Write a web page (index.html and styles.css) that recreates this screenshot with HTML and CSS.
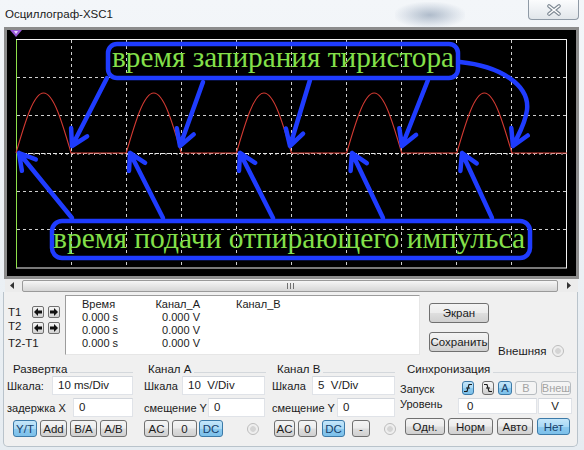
FILE: index.html
```html
<!DOCTYPE html>
<html>
<head>
<meta charset="utf-8">
<link rel="stylesheet" href="styles.css">
</head>
<body>
<div class="win">
  <div class="blur"></div>
  <div class="titlebar">
    <span class="title">Осциллограф-XSC1</span>
    <div class="close">
      <svg width="16" height="12" viewBox="0 0 16 12"><path d="M3,2 L13,10 M13,2 L3,10" stroke="#7d8893" stroke-width="3.6" stroke-linecap="round"/><path d="M3,2 L13,10 M13,2 L3,10" stroke="#fff" stroke-width="1.6" stroke-linecap="round"/></svg>
    </div>
  </div>

  <div class="scope">
    <svg width="569" height="246" viewBox="7 30 569 246">
      <rect x="7" y="30" width="569" height="246" fill="#000"/>
      <g stroke="#cfcfcf" stroke-width="1" stroke-dasharray="3 3" fill="none">
        <path d="M71.5,40 V268 M126.5,40 V268 M181.5,40 V268 M236.5,40 V268 M291.5,40 V268 M346.5,40 V268 M401.5,40 V268 M456.5,40 V268 M511.5,40 V268"/>
        <path d="M17,77.5 H566 M17,115.5 H566 M17,191.5 H566 M17,229.5 H566"/>
      </g>
      <rect x="16.5" y="39.5" width="550" height="228.5" fill="none" stroke="#f2f2f2" stroke-width="1"/>
      <path d="M16.5,40 V268" stroke="#8ee04a" stroke-width="1"/>
      <path d="M17,153.5 H566" stroke="#e8e8e8" stroke-width="1" stroke-dasharray="4 2"/>
      <path d="M17,154 H566" stroke="#d8d8d8" stroke-width="2" stroke-dasharray="1 4.5"/>
      <path fill="none" stroke="#d23a32" stroke-width="1.1" d="M16,153 C25.21,121.5 33.59,93 43.55,93 C53.51,93 61.89,121.5 71.1,153 L126.2,153 C135.41,121.5 143.79,93 153.75,93 C163.71,93 172.09,121.5 181.3,153 L236.4,153 C245.61,121.5 253.99,93 263.95,93 C273.91,93 282.29,121.5 291.5,153 L346.6,153 C355.81,121.5 364.19,93 374.15,93 C384.11,93 392.49,121.5 401.7,153 L456.8,153 C466.01,121.5 474.39,93 484.35,93 C494.31,93 502.69,121.5 511.9,153 L567,153"/>
      <path d="M10,30 H22 L16,37 Z" fill="#9a5ad8"/>
      <path d="M14,31 H18 L16,34 Z" fill="#e8d8ff"/>
      <g fill="none" stroke="#1f3cff" stroke-width="4.5" stroke-linecap="round" stroke-linejoin="round">
        <rect x="108" y="44" width="350" height="34" rx="9"/>
        <rect x="52" y="221" width="478" height="37" rx="10"/>
        <path d="M107,78 L72,146 M87.1,136.3 L72,146 L71.1,128"/>
        <path d="M203,82 L180,146 M193.7,134.4 L180,146 L176.8,128.3"/>
        <path d="M310,80 L290,146 M303.1,133.7 L290,146 L285.9,128.5"/>
        <path d="M428,80 L402,146 M416.1,134.8 L402,146 L399.3,128.2"/>
        <path d="M460,62 C500,66 530,85 527,110 C525,125 518,135 513,146 M527.7,135.5 L513,146 L511.3,128.1"/>
        <path d="M72,218 L19,153 M21.9,170.8 L19,153 L35.8,159.4"/>
        <path d="M163,218 L130,153 M129,171 L130,153 L145.1,162.8"/>
        <path d="M273,218 L240,153 M239,171 L240,153 L255.1,162.8"/>
        <path d="M383,218 L352,153 M350.6,170.9 L352,153 L366.8,163.2"/>
        <path d="M492,218 L462,153 M460.4,170.9 L462,153 L476.7,163.4"/>
      </g>
      <text x="112" y="67" class="ann" textLength="342" lengthAdjust="spacingAndGlyphs">время запирания тиристора</text>
      <text x="53" y="248" class="ann" textLength="472" lengthAdjust="spacingAndGlyphs">время подачи отпирающего импульса</text>
    </svg>
  </div>

  <div class="hscroll">
    <div class="sbtn"><svg width="5" height="7" viewBox="0 0 5 7"><path d="M4,0 L0,3.5 L4,7 Z" fill="#333"/></svg></div>
    <div class="thumb"><span class="grip"></span></div>
    <div class="sbtn right"><svg width="5" height="7" viewBox="0 0 5 7"><path d="M1,0 L5,3.5 L1,7 Z" fill="#333"/></svg></div>
  </div>

  <div class="lower">
    <div class="readout">
      <div class="tpanel">
        <div class="trow r1"><span class="tlabel">T1</span>
          <span class="abtn"><svg width="10" height="10" viewBox="0 0 10 10"><path d="M1,5 L5,1 V3.5 H9 V6.5 H5 V9 Z" fill="#111"/></svg></span>
          <span class="abtn"><svg width="10" height="10" viewBox="0 0 10 10"><path d="M9,5 L5,1 V3.5 H1 V6.5 H5 V9 Z" fill="#111"/></svg></span>
        </div>
        <div class="trow r2"><span class="tlabel up">T2</span>
          <span class="abtn"><svg width="10" height="10" viewBox="0 0 10 10"><path d="M1,5 L5,1 V3.5 H9 V6.5 H5 V9 Z" fill="#111"/></svg></span>
          <span class="abtn"><svg width="10" height="10" viewBox="0 0 10 10"><path d="M9,5 L5,1 V3.5 H1 V6.5 H5 V9 Z" fill="#111"/></svg></span>
        </div>
        <div class="tdiff">T2-T1</div>
      </div>
      <div class="table">
        <div class="th">Время</div><div class="th c2">Канал_А</div><div class="th c3">Канал_В</div>
        <div>0.000 s</div><div class="c2">0.000 V</div><div class="c3"></div>
        <div>0.000 s</div><div class="c2">0.000 V</div><div class="c3"></div>
        <div>0.000 s</div><div class="c2">0.000 V</div><div class="c3"></div>
      </div>
      <div class="btncol">
        <div class="btn big">Экран</div>
        <div class="btn big save">Сохранить</div>
      </div>
      <div class="ext">Внешняя <span class="radio"></span></div>
    </div>

    <div class="controls">
      <div class="group g1">
        <div class="gtitle">Развертка</div>
        <div class="row"><span class="lbl" style="width:45px">Шкала:</span><span class="inp" style="width:81px">10 ms/Div</span></div>
        <div class="row"><span class="lbl" style="width:66px">задержка X</span><span class="inp" style="width:60px">0</span></div>
        <div class="row brow b1">
          <span class="btn sel" style="width:24px">Y/T</span>
          <span class="btn" style="width:27px">Add</span>
          <span class="btn" style="width:27px">B/A</span>
          <span class="btn" style="width:27px">A/B</span>
        </div>
      </div>
      <div class="group g2">
        <div class="gtitle">Канал A</div>
        <div class="row"><span class="lbl" style="width:38px">Шкала</span><span class="inp pre" style="width:83px">10  V/Div</span></div>
        <div class="row"><span class="lbl" style="width:64px">смещение Y</span><span class="inp" style="width:57px">0</span></div>
        <div class="row brow b2">
          <span class="btn" style="width:25px">AC</span>
          <span class="btn" style="width:25px;margin-left:3px">0</span>
          <span class="btn sel" style="width:24px;margin-left:2px">DC</span>
          <span class="radio" style="margin-left:24px"></span>
        </div>
      </div>
      <div class="group g3">
        <div class="gtitle">Канал B</div>
        <div class="row"><span class="lbl" style="width:40px">Шкала</span><span class="inp pre" style="width:83px">5  V/Div</span></div>
        <div class="row"><span class="lbl" style="width:65px">смещение Y</span><span class="inp" style="width:58px">0</span></div>
        <div class="row brow b3">
          <span class="btn" style="width:21px">AC</span>
          <span class="btn" style="width:19px;margin-left:3px">0</span>
          <span class="btn sel" style="width:23px;margin-left:5px">DC</span>
          <span class="btn" style="width:18px;margin-left:7px">-</span>
          <span class="radio" style="margin-left:14px"></span>
        </div>
      </div>
      <div class="group g4">
        <div class="gtitle">Синхронизация</div>
        <div class="row srow1"><span class="lbl" style="width:62px">Запуск</span>
          <span class="btn sel sm" style="width:12px"><svg width="10" height="10" viewBox="0 0 10 10"><path d="M1,8.5 H4 L6,1.5 H9 M3,5 H7" fill="none" stroke="#1a1a1a" stroke-width="1.1"/></svg></span>
          <span class="btn sm" style="width:12px;margin-left:8px"><svg width="10" height="10" viewBox="0 0 10 10"><path d="M1,1.5 H4 L6,8.5 H9 M3,5 H7" fill="none" stroke="#1a1a1a" stroke-width="1.1"/></svg></span>
          <span class="btn sel sm" style="width:14px;margin-left:4px">A</span>
          <span class="btn dis sm" style="width:22px;margin-left:3px">B</span>
          <span class="btn dis sm" style="width:30px;margin-left:4px">Внеш</span>
        </div>
        <div class="row srow2"><span class="lbl" style="width:58px">Уровень</span><span class="inp lvl" style="width:79px">0</span><span class="inp lvl unit" style="width:34px">V</span></div>
        <div class="row brow b4">
          <span class="btn" style="width:40px">Одн.</span>
          <span class="btn" style="width:45px;margin-left:3px">Норм</span>
          <span class="btn" style="width:36px;margin-left:4px">Авто</span>
          <span class="btn sel" style="width:33px;margin-left:4px">Нет</span>
        </div>
      </div>
    </div>
  </div>
</div>
</body>
</html>
```

FILE: styles.css
```css
* { box-sizing: border-box; }
body {
  margin: 0;
  background: #e9eef3;
  font-family: "Liberation Sans", Arial, sans-serif;
  font-size: 11px;
  color: #1b1b1b;
}
.win {
  position: relative;
  width: 584px;
  height: 450px;
  overflow: hidden;
  background: linear-gradient(180deg, #f3f6f9 0%, #e6ecf1 100%);
}
.blur {
  position: absolute;
  left: 395px;
  top: 2px;
  width: 70px;
  height: 26px;
  background: radial-gradient(ellipse at center, rgba(120,140,165,0.55) 0%, rgba(160,175,195,0.25) 50%, rgba(255,255,255,0) 75%);
}
.titlebar {
  position: relative;
  height: 27px;
  display: flex;
  justify-content: space-between;
  align-items: flex-start;
  padding: 0 5px 0 5px;
}
.title {
  margin-top: 7px;
  line-height: 14px;
  font-size: 11.5px;
  color: #1a1a1a;
}
.close {
  width: 51px;
  height: 20px;
  border: 1px solid #8f9aa6;
  border-top: none;
  border-radius: 0 0 4px 4px;
  background: linear-gradient(180deg, #fbfcfd 0%, #eef1f4 50%, #e1e6ea 100%);
  display: flex;
  align-items: center;
  justify-content: center;
}
.close svg { display: block; }

.scope {
  margin-left: 4px;
  width: 575px;
  height: 252px;
  border: 3px solid #8c8c8c;
  box-shadow: inset 0 0 0 1px #5a5a5a;
  background: #000;
}
.scope svg { display: block; }
.ann {
  font-family: "Liberation Serif", "DejaVu Serif", "Noto Serif", serif;
  font-size: 30px;
  fill: #84e04a;
}

.hscroll {
  margin-left: 5px;
  width: 573px;
  height: 13px;
  display: flex;
  align-items: center;
  background: #ececec;
}
.sbtn {
  width: 15px;
  height: 13px;
  display: flex;
  align-items: center;
  justify-content: center;
}
.sbtn svg { display: block; }
.sbtn.right { width: 20px; margin-left: auto; }
.thumb {
  margin-left: 2px;
  width: 536px;
  height: 12px;
  border: 1px solid #9a9a9a;
  border-radius: 2px;
  background: linear-gradient(180deg, #f6f6f6 0%, #e6e6e6 50%, #d6d6d6 100%);
  display: flex;
  align-items: center;
  justify-content: center;
}
.grip {
  width: 7px;
  height: 6px;
  background: repeating-linear-gradient(90deg, #6f6f6f 0 1px, transparent 1px 3px);
}

.lower {
  margin-left: 3px;
  width: 575px;
  height: 155px;
  border: 1px solid #b9c3cb;
  border-top: none;
  border-radius: 0 0 5px 5px;
  background: #f0f0f0;
}
.readout {
  display: flex;
  height: 64px;
}
.tpanel {
  width: 61px;
  padding-left: 4px;
}
.trow {
  display: flex;
  align-items: center;
  height: 12px;
}
.trow.r1 { margin-top: 14px; }
.trow.r2 { margin-top: 4px; }
.tlabel { width: 24px; font-size: 11.5px; line-height: 12px; }
.tlabel.up { position: relative; top: -2px; }
.abtn {
  width: 12px;
  height: 12px;
  margin-right: 4px;
  border: 1px solid #707070;
  border-radius: 2px;
  background: linear-gradient(180deg, #f4f4f4 0%, #e4e4e4 50%, #d2d2d2 100%);
  display: flex;
  align-items: center;
  justify-content: center;
}
.abtn svg { display: block; }
.tdiff {
  margin-top: 3px;
  line-height: 12px;
  font-size: 11.5px;
}
.table {
  margin-top: 3px;
  width: 355px;
  height: 60px;
  background: #fff;
  border-top: 1px solid #9c9c9c;
  border-left: 1px solid #9c9c9c;
  border-right: 1px solid #e6e6e6;
  border-bottom: 1px solid #e6e6e6;
  padding: 1px 0 0 16px;
  display: grid;
  grid-template-columns: 66px 52px 80px;
  grid-auto-rows: 13px;
  grid-template-rows: 14px;
  line-height: 13px;
  align-content: start;
}
.table .th { line-height: 14px; }
.table .c2 { text-align: right; }
.table .c3 { padding-left: 36px; }
.btncol {
  margin-left: 9px;
  width: 60px;
  display: flex;
  flex-direction: column;
  padding-top: 11px;
}
.btn {
  height: 17px;
  border: 1px solid #707070;
  border-radius: 3px;
  background: linear-gradient(180deg, #f4f4f4 0%, #ececec 48%, #dedede 52%, #d0d0d0 100%);
  display: flex;
  align-items: center;
  justify-content: center;
  font-size: 11.5px;
  color: #1b1b1b;
  white-space: nowrap;
}
.btn.big { height: 20px; }
.btn.save { margin-top: 9px; }
.btn.sel {
  border-color: #3c7aa8;
  background: linear-gradient(180deg, #c4e6fa 0%, #a9d9f5 50%, #8cc9ee 52%, #7cc0ea 100%);
  color: #16406a;
}
.btn.dis {
  border-color: #b7bcc0;
  background: #f4f4f4;
  color: #a3a3a3;
}
.btn.sm { height: 14px; font-size: 11px; }
.btn svg { display: block; }
.ext {
  margin-left: 9px;
  margin-top: 52px;
  height: 14px;
  line-height: 14px;
  display: flex;
  align-items: center;
  font-size: 11.5px;
}
.ext .radio { margin-left: 6px; }
.radio {
  display: inline-block;
  width: 12px;
  height: 12px;
  border-radius: 50%;
  border: 1px solid #bcbcbc;
  background: radial-gradient(circle at 50% 50%, #d4d4d4 0 35%, #ececec 45%, #f6f6f6 100%);
}

.controls {
  display: flex;
  height: 90px;
}
.group {
  display: flex;
  flex-direction: column;
}
.g1 { width: 132px; padding-left: 3px; }
.g2 { width: 126px; margin-left: 7px; padding-left: 1px; }
.g3 { width: 126px; margin-left: 3px; }
.g4 { width: 176px; margin-left: 2px; }
.gtitle {
  margin-top: 7px;
  height: 13px;
  line-height: 13px;
  display: flex;
  align-items: center;
  font-size: 11.5px;
  white-space: nowrap;
}
.gtitle::after {
  content: "";
  flex: 1;
  margin: 5px 3px 0 3px;
  border-top: 1px solid #d4d8dc;
}
.g1 .gtitle { padding-left: 6px; }
.g2 .gtitle { padding-left: 4px; }
.g3 .gtitle { padding-left: 5px; }
.g4 .gtitle { padding-left: 7px; }
.g4 .gtitle::after { margin-right: 0; }
.row {
  display: flex;
  align-items: center;
  height: 19px;
  margin-top: 3px;
}
.row:nth-child(2) { margin-top: 0; }
.lbl {
  font-size: 11px;
  white-space: nowrap;
}
.inp {
  height: 19px;
  background: #fff;
  border: 1px solid #e0e3e8;
  border-top-color: #d2d6dc;
  padding-left: 5px;
  line-height: 17px;
  font-size: 11.5px;
  white-space: pre;
}
.brow { height: 17px; }
.b1 { padding-left: 6px; }
.b1 .btn + .btn { margin-left: 3px; }
.b3 { padding-left: 2px; }
.srow1 { align-items: flex-end; }
.srow2 { align-items: flex-start; }
.inp.lvl { height: 16px; line-height: 15px; padding-left: 8px; }
.inp.unit { text-align: center; padding-left: 0; margin-left: 1px; }
.b4 { padding-left: 5px; margin-top: 1px; }
```
